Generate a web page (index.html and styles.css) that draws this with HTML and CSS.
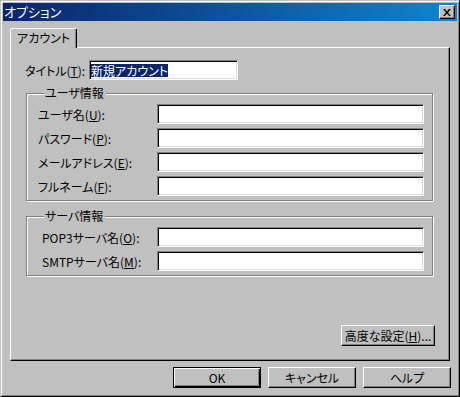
FILE: index.html
```html
<!DOCTYPE html>
<html lang="ja">
<head>
    <meta charset="UTF-8">
    <title>オプション</title>
    <link rel="stylesheet" href="styles.css">
</head>
<body>

    <div class="window">
        <div class="titlebar">
            <span class="title">オプション</span>
            <button class="close-btn" aria-label="閉じる">
                <svg width="8" height="7" viewBox="0 0 8 7">
                    <path d="M0 0h2l2 2.5L6 0h2L5 3.5 8 7H6L4 4.5 2 7H0l3-3.5z" fill="#000"/>
                </svg>
            </button>
        </div>

        <div class="dialog-body">
            <div class="tabs">
                <div class="tab">アカウント</div>
            </div>

            <div class="panel">
                <div class="title-row">
                    <label class="title-label">タイトル(<u>T</u>):</label>
                    <div class="textbox title-box"><span class="selected">新規アカウント</span></div>
                </div>

                <div class="group">
                    <div class="group-title">ユーザ情報</div>
                    <div class="field-grid">
                        <label>ユーザ名(<u>U</u>):</label>
                        <div class="textbox"></div>
                        <label>パスワード(<u>P</u>):</label>
                        <div class="textbox"></div>
                        <label>メールアドレス(<u>E</u>):</label>
                        <div class="textbox"></div>
                        <label>フルネーム(<u>F</u>):</label>
                        <div class="textbox"></div>
                    </div>
                </div>

                <div class="group server-group">
                    <div class="group-title">サーバ情報</div>
                    <div class="field-grid">
                        <label>POP3サーバ名(<u>O</u>):</label>
                        <div class="textbox"></div>
                        <label>SMTPサーバ名(<u>M</u>):</label>
                        <div class="textbox"></div>
                    </div>
                </div>

                <div class="advanced-row">
                    <button class="btn advanced-btn">高度な設定(<u>H</u>)...</button>
                </div>
            </div>

            <div class="footer">
                <button class="btn default-btn">OK</button>
                <button class="btn">キャンセル</button>
                <button class="btn">ヘルプ</button>
            </div>
        </div>
    </div>

</body>
</html>
```

FILE: styles.css
```css
body {
    margin: 0;
    font-family: "Noto Sans CJK JP", sans-serif;
    font-size: 12px;
    font-feature-settings: "palt";
    color: #000;
    background-color: #c0c0c0;
}

.window {
    width: 460px;
    height: 397px;
    box-sizing: border-box;
    display: flex;
    flex-direction: column;
    padding: 2px;
    background-color: #c0c0c0;
    border: 1px solid;
    border-color: #c0c0c0 #000 #000 #c0c0c0;
    box-shadow: inset 1px 1px #fff, inset -1px -1px #808080;
}

.titlebar {
    height: 18px;
    display: flex;
    align-items: center;
    justify-content: space-between;
    padding: 0 2px 0 1px;
    background: linear-gradient(to right, #0a246a, #1084d0);
}

.title {
    color: #fff;
    font-size: 13px;
    line-height: 18px;
}

.close-btn {
    width: 16px;
    height: 14px;
    padding: 0;
    display: flex;
    align-items: center;
    justify-content: center;
    background-color: #c0c0c0;
    border: 1px solid;
    border-color: #fff #000 #000 #fff;
    box-shadow: inset -1px -1px #808080;
}

.dialog-body {
    flex: 1;
    display: flex;
    flex-direction: column;
    padding: 7px 7px 6px 7px;
}

.tabs {
    display: flex;
}

.tab {
    position: relative;
    z-index: 1;
    height: 20px;
    box-sizing: border-box;
    margin-bottom: -1px;
    padding: 0 6px;
    line-height: 18px;
    background-color: #c0c0c0;
    border: 1px solid;
    border-bottom: none;
    border-color: #fff #000 transparent #fff;
    border-radius: 2px 2px 0 0;
    box-shadow: inset -1px 0 #808080;
}

.panel {
    flex: 1;
    display: flex;
    flex-direction: column;
    padding: 12px 16px 14px 14px;
    border: 1px solid;
    border-color: #fff #000 #000 #fff;
    box-shadow: inset -1px -1px #808080;
}

.title-row {
    display: flex;
    align-items: center;
    height: 20px;
}

.title-label {
    width: 64px;
}

.textbox {
    height: 20px;
    box-sizing: border-box;
    background-color: #fff;
    border: 1px solid;
    border-color: #808080 #fff #fff #808080;
    box-shadow: inset 1px 1px #000, inset -1px -1px #dfdfdf;
}

.title-box {
    width: 149px;
    padding-top: 1px;
}

.selected {
    display: inline-block;
    margin-left: 1px;
    line-height: 13px;
    color: #fff;
    background-color: #0a246a;
}

.group {
    margin: 13px 0 0 1px;
    padding: 0 8px 4px 11px;
    border: 1px solid #808080;
    box-shadow: inset 1px 1px #fff, 1px 1px #fff;
}

.server-group {
    margin-top: 15px;
}

.group-title {
    width: fit-content;
    margin: -8px 0 0 6px;
    padding: 0 2px 0 1px;
    line-height: 14px;
    background-color: #c0c0c0;
}

.field-grid {
    display: grid;
    grid-template-columns: 119px 267px;
    row-gap: 4px;
    align-items: center;
    margin-top: 4px;
}

.server-group .field-grid {
    padding-left: 4px;
    grid-template-columns: 115px 267px;
}

.advanced-row {
    display: flex;
    justify-content: flex-end;
    margin: auto -2px 0 0;
}

.btn {
    height: 21px;
    box-sizing: border-box;
    padding: 0;
    font: inherit;
    color: #000;
    background-color: #c0c0c0;
    border: 1px solid;
    border-color: #fff #000 #000 #fff;
    box-shadow: inset -1px -1px #808080;
}

.advanced-btn {
    width: 94px;
}

.footer {
    display: flex;
    justify-content: flex-end;
    gap: 7px;
    margin: 6px -1px 0 0;
}

.footer .btn {
    width: 88px;
}

.default-btn {
    border-color: #000;
    box-shadow: inset 1px 1px #fff, inset -1px -1px #000, inset -2px -2px #808080;
}
```
